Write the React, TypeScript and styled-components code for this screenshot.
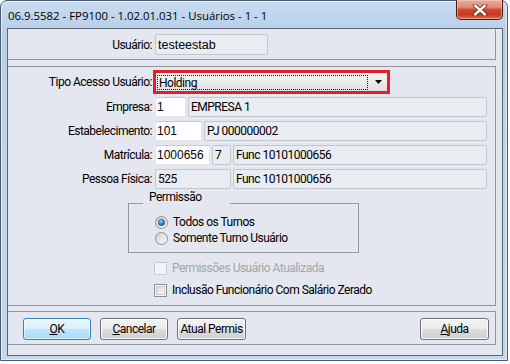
import React from "react";
import styled, { createGlobalStyle } from "styled-components";

const NARROW = `Roboto, "Liberation Sans", Arial, sans-serif`;
const REGULAR = `"Liberation Sans", Arial, sans-serif`;

const GlobalStyle = createGlobalStyle`
  html, body { margin: 0; padding: 0; background: #ffffff; }
  body { width: 510px; height: 364px; overflow: hidden; }
  *, *::before, *::after { box-sizing: border-box; }
`;

const Window = styled.div`
  width: 508px;
  height: 361px;
  border: 1px solid #4b5b6e;
  border-radius: 7px 7px 0 0;
  background: linear-gradient(180deg, #c9dcf1 0%, #b8cfe9 8%, #bfd4eb 40%, #c3d7ed 100%);
  box-shadow: inset 0 0 0 1px rgba(255, 255, 255, 0.55);
  display: flex;
  flex-direction: column;
  padding: 0 4px 4px 6px;
  font-family: ${NARROW};
  font-size: 12px;
  letter-spacing: -0.5px;
  color: #000;
`;

const TitleBar = styled.div`
  height: 27px;
  display: flex;
  align-items: flex-start;
  padding-left: 1px;
`;

const TitleText = styled.div`
  flex: 1;
  font-family: "Open Sans", "Noto Sans", sans-serif;
  font-size: 11.4px;
  letter-spacing: 0;
  line-height: 16px;
  margin-top: 7px;
  color: #000;
  white-space: nowrap;
`;

const CloseButton = styled.div`
  width: 47px;
  height: 20px;
  margin-top: -1px;
  border: 1px solid #4a1c16;
  border-top: none;
  border-radius: 0 0 5px 5px;
  background: linear-gradient(180deg, #eeaa9b 0%, #e08d79 38%, #cc452d 52%, #c7391f 78%, #dd6f50 100%);
  box-shadow: inset 0 0 0 1px rgba(255, 220, 210, 0.45);
  display: flex;
  align-items: center;
  justify-content: center;
`;

const Client = styled.div`
  height: 328px;
  border: 1px solid #5b6776;
  background: #e4e7ef;
  display: flex;
  flex-direction: column;
`;

const PanelBase = styled.div`
  width: 488px;
  border-right: 1px solid #8e949d;
  border-bottom: 1px solid #8e949d;
`;

const UserPanel = styled(PanelBase)`
  height: 31px;
`;

const FormPanel = styled(PanelBase)`
  height: 240px;
  margin-top: 6px;
  border-top: 1px solid #8e949d;
  padding-right: 8px;
  display: flex;
  flex-direction: column;
`;

const ButtonPanel = styled(PanelBase)`
  height: 34px;
  margin-top: 5px;
  border-top: 1px solid #8e949d;
  display: flex;
  align-items: flex-start;
  padding: 6px 6px 0 15px;
  gap: 9px;
`;

const Row = styled.div<{ $h: number; $mt: number }>`
  display: flex;
  align-items: center;
  gap: 2px;
  height: ${(p) => p.$h}px;
  margin-top: ${(p) => p.$mt}px;
`;

const Label = styled.div`
  width: 145px;
  text-align: right;
  white-space: nowrap;
  line-height: 16px;
  padding-right: 1px;
`;

const Display = styled.div<{ $w?: number }>`
  ${(p) => (p.$w ? `width: ${p.$w}px;` : "flex: 1;")}
  height: 100%;
  border: 1px solid #c2c6cd;
  border-radius: 2px;
  background: #e9ecf1;
  padding-left: 2px;
  display: flex;
  align-items: center;
  white-space: nowrap;
  overflow: hidden;
`;

const UserDisplay = styled(Display)`
  font-family: ${REGULAR};
  font-size: 12.5px;
  letter-spacing: 0;
`;

const WhiteEdit = styled.div<{ $w: number }>`
  width: ${(p) => p.$w}px;
  height: 100%;
  background: #ffffff;
  border: 1px solid #e2e4ea;
  border-top-color: #c9ccd3;
  padding-left: 1px;
  display: flex;
  align-items: center;
  font-family: ${REGULAR};
  font-size: 12px;
  letter-spacing: 0;
  white-space: nowrap;
`;

const ComboHighlight = styled.div`
  width: 237px;
  height: 100%;
  margin-left: -2px;
  border: 3px solid #e1202b;
  display: flex;
`;

const ComboInner = styled.div`
  flex: 1;
  display: flex;
  align-items: stretch;
  background: linear-gradient(180deg, #f7f7f7 0%, #ececec 50%, #dedede 100%);
`;

const FocusBox = styled.div`
  flex: 1;
  margin: 2px 0 1px 1px;
  border: 1px dotted #1a1a1a;
  padding-left: 1px;
  display: flex;
  align-items: center;
  line-height: 14px;
`;

const ArrowCell = styled.div`
  width: 19px;
  display: flex;
  align-items: center;
  justify-content: center;
  padding-left: 2px;
`;

const Group = styled.div`
  width: 231px;
  margin-left: 120px;
  margin-top: 2px;
  display: flex;
  flex-direction: column;
`;

const GroupHeader = styled.div`
  height: 13px;
  display: flex;
  align-items: flex-end;
`;

const GroupLine = styled.div<{ $w?: number }>`
  ${(p) => (p.$w ? `width: ${p.$w}px;` : "flex: 1;")}
  height: 1px;
  background: #9197a0;
`;

const GroupCaption = styled.div`
  width: 87px;
  height: 13px;
  line-height: 13px;
  padding-left: 6px;
  white-space: nowrap;
`;

const GroupBody = styled.div`
  height: 49px;
  border: 1px solid #9197a0;
  border-top: none;
  padding: 10px 0 0 26px;
  display: flex;
  flex-direction: column;
`;

const OptionRow = styled.div<{ $mt?: number; $ml?: number; $disabled?: boolean }>`
  height: 16px;
  display: flex;
  align-items: center;
  gap: 5px;
  margin-top: ${(p) => p.$mt ?? 0}px;
  margin-left: ${(p) => p.$ml ?? 0}px;
  color: ${(p) => (p.$disabled ? "#a3a5aa" : "#000")};
  white-space: nowrap;
  line-height: 16px;
`;

const Button = styled.div<{ $w: number; $default?: boolean; $push?: boolean }>`
  width: ${(p) => p.$w}px;
  height: 22px;
  border-radius: 3px;
  border: 1px solid ${(p) => (p.$default ? "#3c7fb1" : "#707070")};
  background: ${(p) =>
    p.$default
      ? "linear-gradient(180deg, #eaf6fd 0%, #d9f0fc 48%, #bee6fd 52%, #a7d9f5 100%)"
      : "linear-gradient(180deg, #f2f2f2 0%, #ebebeb 48%, #dddddd 52%, #cfcfcf 100%)"};
  box-shadow: inset 0 0 0 1px ${(p) => (p.$default ? "rgba(255,255,255,0.55)" : "#fcfcfc")};
  display: flex;
  align-items: center;
  justify-content: center;
  line-height: 16px;
  white-space: nowrap;
  ${(p) => (p.$push ? "margin-left: auto;" : "")}
`;

const RadioIcon = ({ checked }: { checked?: boolean }) => (
  <svg width="13" height="13" viewBox="0 0 13 13">
    <defs>
      <linearGradient id="radioBg" x1="0" y1="0" x2="1" y2="1">
        <stop offset="0" stopColor="#cfcfcf" />
        <stop offset="1" stopColor="#fbfbfb" />
      </linearGradient>
      <radialGradient id="radioDot" cx="0.4" cy="0.35" r="0.75">
        <stop offset="0" stopColor="#a3dcfb" />
        <stop offset="0.45" stopColor="#2f8fdc" />
        <stop offset="1" stopColor="#10508f" />
      </radialGradient>
    </defs>
    <circle cx="6.5" cy="6.5" r="6" fill="url(#radioBg)" stroke="#8c8e91" strokeWidth="1" />
    {checked && <circle cx="6.5" cy="6.5" r="3.2" fill="url(#radioDot)" stroke="#1d5b9c" strokeWidth="0.6" />}
  </svg>
);

const CheckIcon = ({ disabled }: { disabled?: boolean }) => (
  <svg width="13" height="13" viewBox="0 0 13 13">
    <defs>
      <linearGradient id="chkBg" x1="0" y1="0" x2="1" y2="1">
        <stop offset="0" stopColor="#d6d6d6" />
        <stop offset="1" stopColor="#fbfbfb" />
      </linearGradient>
    </defs>
    <rect
      x="0.5"
      y="0.5"
      width="12"
      height="12"
      fill={disabled ? "#f4f4f4" : "#f6f6f6"}
      stroke={disabled ? "#c8cacd" : "#8c8e91"}
    />
    {!disabled && <rect x="2.5" y="2.5" width="8" height="8" fill="url(#chkBg)" stroke="#c9c9c9" />}
  </svg>
);

const ComboArrow = () => (
  <svg width="7" height="4" viewBox="0 0 7 4">
    <path d="M0 0 H7 L3.5 4 Z" fill="#000" />
  </svg>
);

const CloseGlyph = () => (
  <svg width="16" height="12" viewBox="0 0 16 12">
    <path d="M3 1.5 L13 10.5 M13 1.5 L3 10.5" stroke="#5a1f16" strokeWidth="4" strokeLinecap="round" />
    <path d="M3 1.5 L13 10.5 M13 1.5 L3 10.5" stroke="#ffffff" strokeWidth="2.4" strokeLinecap="round" />
  </svg>
);

export default function App() {
  return (
    <>
      <GlobalStyle />
      <Window>
        <TitleBar>
          <TitleText>06.9.5582 - FP9100 - 1.02.01.031 - Usuários - 1 - 1</TitleText>
          <CloseButton>
            <CloseGlyph />
          </CloseButton>
        </TitleBar>
        <Client>
          <UserPanel>
            <Row $h={21} $mt={5}>
              <Label>Usuário:</Label>
              <UserDisplay $w={113}>testeestab</UserDisplay>
            </Row>
          </UserPanel>
          <FormPanel>
            <Row $h={24} $mt={3}>
              <Label>Tipo Acesso Usuário:</Label>
              <ComboHighlight>
                <ComboInner>
                  <FocusBox>Holding</FocusBox>
                  <ArrowCell>
                    <ComboArrow />
                  </ArrowCell>
                </ComboInner>
              </ComboHighlight>
            </Row>
            <Row $h={20} $mt={3}>
              <Label>Empresa:</Label>
              <WhiteEdit $w={31}>1</WhiteEdit>
              <Display>EMPRESA 1</Display>
            </Row>
            <Row $h={20} $mt={4}>
              <Label>Estabelecimento:</Label>
              <WhiteEdit $w={47}>101</WhiteEdit>
              <Display>PJ 000000002</Display>
            </Row>
            <Row $h={20} $mt={4}>
              <Label>Matrícula:</Label>
              <WhiteEdit $w={55}>1000656</WhiteEdit>
              <Display $w={19}>7</Display>
              <Display>Func 10101000656</Display>
            </Row>
            <Row $h={20} $mt={4}>
              <Label>Pessoa Física:</Label>
              <Display $w={76}>525</Display>
              <Display>Func 10101000656</Display>
            </Row>
            <Group>
              <GroupHeader>
                <GroupLine $w={15} />
                <GroupCaption>Permissão</GroupCaption>
                <GroupLine />
              </GroupHeader>
              <GroupBody>
                <OptionRow>
                  <RadioIcon checked />
                  <span>Todos os Turnos</span>
                </OptionRow>
                <OptionRow>
                  <RadioIcon />
                  <span>Somente Turno Usuário</span>
                </OptionRow>
              </GroupBody>
            </Group>
            <OptionRow $mt={7} $ml={146} $disabled>
              <CheckIcon disabled />
              <span>Permissões Usuário Atualizada</span>
            </OptionRow>
            <OptionRow $mt={6} $ml={146}>
              <CheckIcon />
              <span>Inclusão Funcionário Com Salário Zerado</span>
            </OptionRow>
          </FormPanel>
          <ButtonPanel>
            <Button $w={68} $default>
              <span>
                <u>O</u>K
              </span>
            </Button>
            <Button $w={68}>
              <span>
                <u>C</u>ancelar
              </span>
            </Button>
            <Button $w={69}>Atual Permis</Button>
            <Button $w={69} $push>
              <span>
                <u>A</u>juda
              </span>
            </Button>
          </ButtonPanel>
        </Client>
      </Window>
    </>
  );
}
